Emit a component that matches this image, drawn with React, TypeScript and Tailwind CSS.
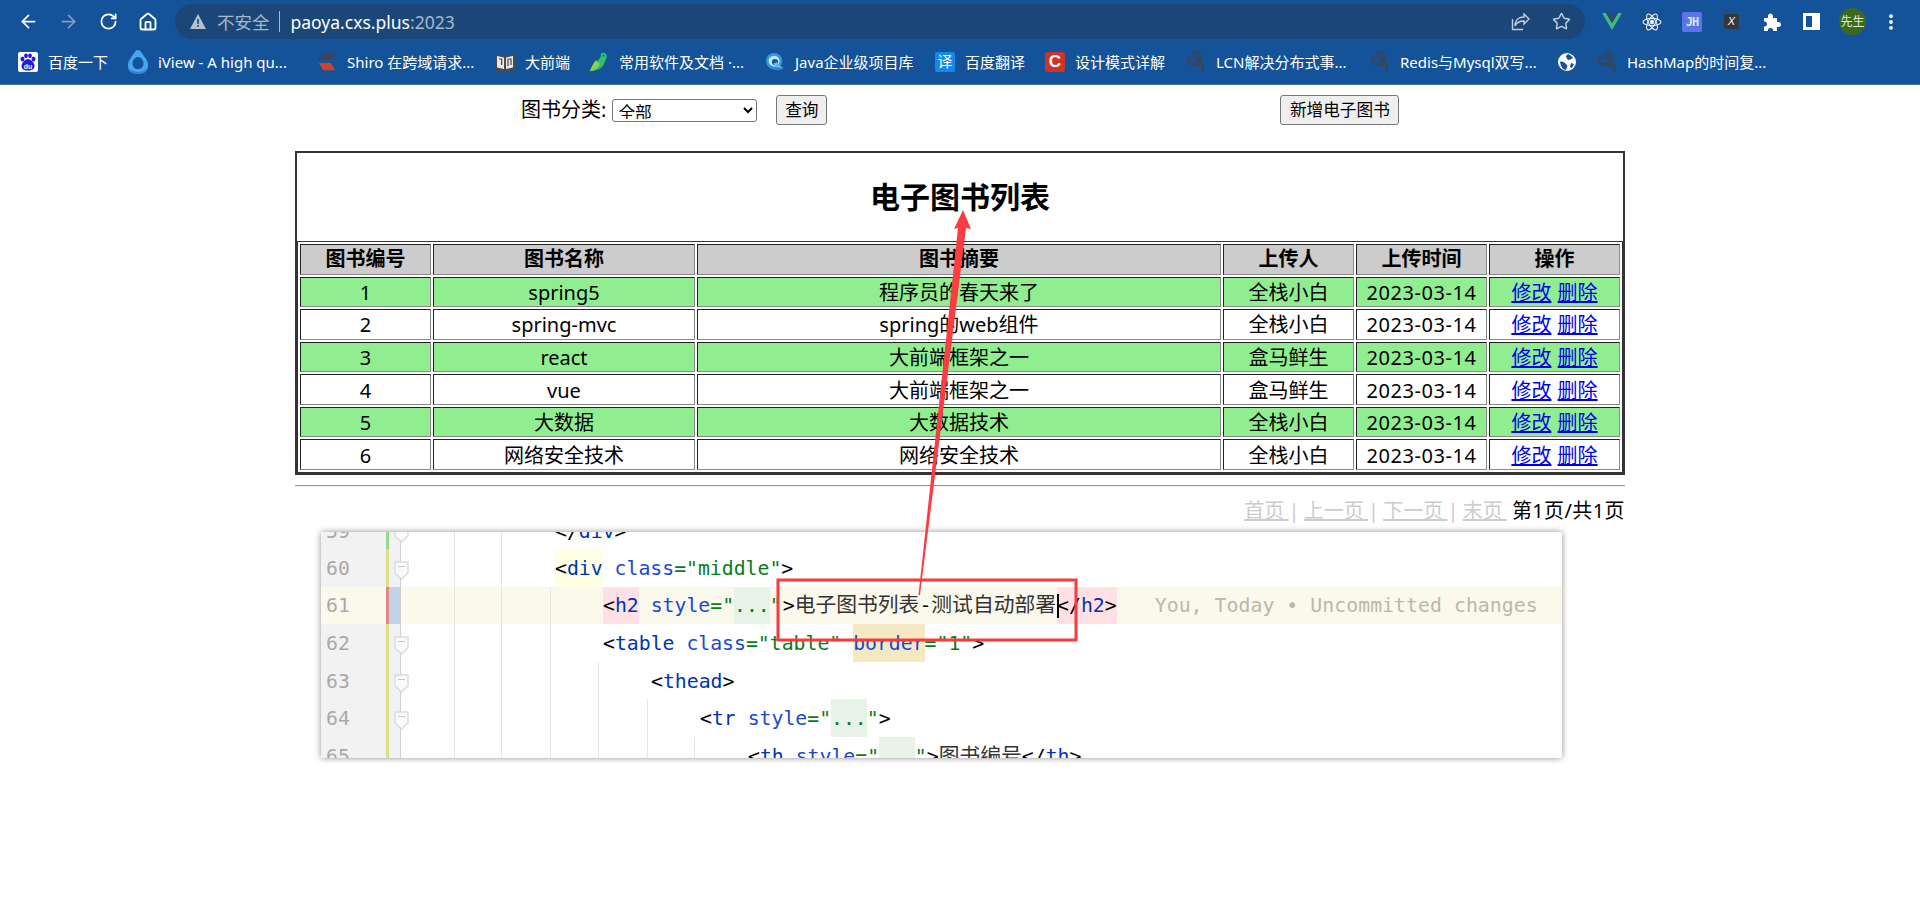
import React from "react";
import { ArrowLeft, ArrowRight, RotateCw, House, Star, EllipsisVertical } from "lucide-react";

const sans = "font-['Noto_Sans','Noto_Sans_CJK_SC',sans-serif]";

function Baidu() {
  return (
    <svg width="20" height="20" viewBox="0 0 20 20">
      <rect width="20" height="20" rx="2" fill="#fff" />
      <g fill="#2319dc">
        <ellipse cx="4.500" cy="7" rx="2" ry="2.500" />
        <ellipse cx="8" cy="3.800" rx="1.900" ry="2.400" />
        <ellipse cx="12" cy="3.800" rx="1.900" ry="2.400" />
        <ellipse cx="15.500" cy="7" rx="2" ry="2.500" />
        <path d="M10 7c3 0 6.500 4 6.500 7 0 3-2.500 4.500-6.500 4.500s-6.500-1.500-6.500-4.500c0-3 3.500-7 6.500-7z" />
      </g>
      <text x="10" y="16.500" fontSize="7" fontWeight="700" textAnchor="middle" fill="#fff" fontFamily="Liberation Sans">du</text>
    </svg>
  );
}
function IView() {
  return (
    <svg width="20" height="24" viewBox="0 0 20 24">
      <path d="M10 0c1.500 0 2.500 1 3.500 2.500L18 9c2 3 2 5 2 7 0 5-4 8-10 8S0 21 0 16c0-2 0-4 2-7l4.500-6.500C7.500 1 8.500 0 10 0z" fill="#45a5ee" />
      <path d="M10 7c3.200 0 5.500 3 5.500 6.500S13.200 19 10 19s-5.500-2-5.500-5.500S6.800 7 10 7z" fill="#14539a" />
      <path d="M1 19c2 3 5 5 9 5s8-2 9-6c-2 2.500-5 4-8 4-4 0-7-1-10-3z" fill="#2f7fd6" />
    </svg>
  );
}
function Shiro() {
  return (
    <svg width="22" height="20" viewBox="0 0 22 20">
      <path d="M7 1h13l-5 7H2z" fill="#3f4450" />
      <path d="M2 11h13l5 8H7z" fill="#d8402e" />
    </svg>
  );
}
function Book() {
  return (
    <svg width="20" height="20" viewBox="0 0 20 20">
      <path d="M0 2l10 2 10-2v16l-10 2-10-2z" fill="#4a4a4a" />
      <path d="M2 4l7 1.500V17l-7-1.500zM18 4l-7 1.500V17l7-1.500z" fill="#e8e8e8" />
      <path d="M4 7h2.600v6M13 7h3v6M13 7v7" stroke="#444" strokeWidth="1.200" fill="none" />
    </svg>
  );
}
function Bird() {
  return (
    <svg width="24" height="24" viewBox="0 0 24 24">
      <path d="M16 1c4 0 6 2 5 6l-3 7c-2 5-7 8-15 9 2-4 3-7 6-11 2-3 4-4 5-6 0-2 0-4 2-5z" fill="#2fc068" />
      <path d="M1 23c5-1 10-3 12-9l-5-4c-3 4-5 8-7 13z" fill="#8bd14a" />
      <circle cx="17.500" cy="4.500" r="1.100" fill="#14539a" />
    </svg>
  );
}
function JavaIcon() {
  return (
    <svg width="22" height="22" viewBox="0 0 22 22">
      <circle cx="10" cy="10" r="9" fill="#2d9ae0" />
      <circle cx="10" cy="10" r="6" fill="#c6e6f7" />
      <circle cx="11" cy="11" r="3.400" fill="#14539a" />
      <path d="M9 13c3 4 7 5 12 5-4-2-6-4-8-7z" fill="#5fbdea" />
      <path d="M5 15c4 4 9 5 14 3" stroke="#2d8ccc" strokeWidth="2" fill="none" />
    </svg>
  );
}
function YiIcon() {
  return (
    <div className="flex h-5 w-5 items-center justify-center rounded-[2px] bg-[#1588ec] text-[15px] leading-none text-white">译</div>
  );
}
function CIcon() {
  return (
    <div className="flex h-5 w-5 items-center justify-center rounded-[3px] bg-[#cf3429] font-['Liberation_Sans',sans-serif] text-[17px] leading-none font-bold text-white">C</div>
  );
}
function Sketch() {
  return (
    <svg width="20" height="24" viewBox="0 0 20 24" fill="none" stroke="#3d4450" strokeWidth="2">
      <circle cx="11" cy="5.500" r="3.200" />
      <path d="M14 3c1 4 0 8-4 10-2 1-5 1-8-1 0-2 0-4 1-6M15 9l3 13M2 12l6 3 9-1" />
    </svg>
  );
}
function GlobeIcon() {
  return (
    <svg width="18" height="18" viewBox="0 0 18 18">
      <circle cx="9" cy="9" r="9" fill="#fff" />
      <path d="M10 1c2 1 4 2 5 4-2 1-3 2-5 2-1-2-2-2-2-4zM2 9c2-1 4 0 6 2 1 1 2 2 1 3l-1 3c-3 0-5-3-6-8zM13 10l3 1-2 4-2-1z" fill="#14539a" />
    </svg>
  );
}

const bookmarks: { icon: React.ReactNode; text: string; w: string }[] = [
  { icon: <Baidu />, text: "百度一下", w: "w-[110px]" },
  { icon: <IView />, text: "iView - A high qu...", w: "w-[189px]" },
  { icon: <Shiro />, text: "Shiro 在跨域请求...", w: "w-[178px]" },
  { icon: <Book />, text: "大前端", w: "w-[94px]" },
  { icon: <Bird />, text: "常用软件及文档 ·...", w: "w-[176px]" },
  { icon: <JavaIcon />, text: "Java企业级项目库", w: "w-[170px]" },
  { icon: <YiIcon />, text: "百度翻译", w: "w-[110px]" },
  { icon: <CIcon />, text: "设计模式详解", w: "w-[141px]" },
  { icon: <Sketch />, text: "LCN解决分布式事...", w: "w-[184px]" },
  { icon: <Sketch />, text: "Redis与Mysql双写...", w: "w-[187px]" },
  { icon: <GlobeIcon />, text: "", w: "w-[40px]" },
  { icon: <Sketch />, text: "HashMap的时间复...", w: "w-[190px]" },
];

function Browser() {
  return (
    <div className={`h-[85px] border-b border-[#3f72ad] bg-[#14539a] text-white ${sans}`}>
      <div className="flex h-[39px] items-start pt-[4px]">
        <div className="flex h-[35px] w-[175px] items-center pl-[18px] text-white">
          <ArrowLeft size={21} strokeWidth={2} />
          <ArrowRight size={21} strokeWidth={2} className="ml-[19px] text-[#7e9fc6]" />
          <RotateCw size={19} strokeWidth={2.200} className="ml-[20px]" />
          <House size={20} strokeWidth={2.200} className="ml-[20px]" />
        </div>
        <div className="flex h-[35px] w-[1410px] items-center rounded-full bg-[#1a4778] pl-[15px] pr-[14px]">
          <svg width="16" height="15" viewBox="0 0 16 15">
            <path d="M8 0l8 15H0z" fill="#b4c0ce" />
            <rect x="7.200" y="5" width="1.600" height="5" fill="#1a4778" />
            <rect x="7.200" y="11" width="1.600" height="1.700" fill="#1a4778" />
          </svg>
          <span className="ml-[11px] pt-[2px] text-[17.500px] leading-none text-[#a8b8ca]">不安全</span>
          <span className="ml-[9px] h-[21px] w-px bg-[#a8b8ca]" />
          <span className="ml-[11px] pt-[2px] text-[17.500px] leading-none">paoya.cxs.plus<span className="text-[#a8b8ca]">:2023</span></span>
          <div className="ml-auto flex items-center gap-[22px] text-[#c5cfdb]">
            <svg width="19" height="18" viewBox="0 0 19 18" fill="none" stroke="currentColor" strokeWidth="1.400">
              <path d="M13 1l5 5-5 5V8c-4 0-7 1-9 5 0-6 4-9 9-9z" />
              <path d="M12 16.500H1.500V6" />
            </svg>
            <Star size={19} strokeWidth={1.800} />
          </div>
        </div>
        <div className="flex h-[35px] flex-1 items-center pl-[17px]">
          <svg width="20" height="17" viewBox="0 0 20 17">
            <path d="M0 0h4l6 10L16 0h4L10 17z" fill="#41b883" />
            <path d="M4 0h3.500L10 4.500 12.500 0H16l-6 10z" fill="#35495e" />
          </svg>
          <svg className="ml-[20px]" width="20" height="20" viewBox="0 0 20 20" fill="none" stroke="#e4edf6" strokeWidth="1.100">
            <rect width="20" height="20" fill="#1a4e8c" stroke="none" />
            <ellipse cx="10" cy="10" rx="9" ry="3.600" />
            <ellipse cx="10" cy="10" rx="9" ry="3.600" transform="rotate(60 10 10)" />
            <ellipse cx="10" cy="10" rx="9" ry="3.600" transform="rotate(120 10 10)" />
            <circle cx="10" cy="10" r="1.700" fill="#e4edf6" />
          </svg>
          <div className="ml-[20px] flex h-[20px] w-[20px] items-center justify-center rounded-[2px] bg-[#5b74e8] font-['DejaVu_Sans_Mono',monospace] text-[12px] leading-none font-bold tracking-[-1px] text-[#dfe6ff]">JH</div>
          <div className="ml-[22px] flex h-[15px] w-[15px] items-center justify-center rounded-[2px] bg-[#33383d] font-['Liberation_Sans',sans-serif] text-[11px] leading-none italic text-white">X</div>
          <svg className="ml-[24px]" width="18" height="18" viewBox="0 0 18 18" fill="#fff">
            <path d="M1 5h4c-.5-3 1-4.500 2.500-4.500S10.500 2 10 5h4v4c3-.5 4 1 4 2.500S17 14.500 14 14v4H10c.5-2-1-3-2.500-3S4.500 16 5 18H1v-4.500c2 .5 3-1 3-2.500S3 8 1 8.500z" />
          </svg>
          <div className="ml-[22px] h-[17px] w-[17px] border-[3px] border-r-[8px] border-white" />
          <div className="ml-[19px] flex h-[27px] w-[27px] items-center justify-center rounded-full bg-[#3a6a1e] text-[12px] leading-none text-[#e6f0dc]">先生</div>
          <EllipsisVertical size={20} strokeWidth={2.600} className="ml-[15px]" />
        </div>
      </div>
      <div className="flex h-[45px] items-center pl-[18px]">
        {bookmarks.map((b, i) => (
          <div key={i} className={`flex shrink-0 items-center ${b.w}`}>
            <div className="flex w-[20px] shrink-0 items-center justify-center">{b.icon}</div>
            {b.text && <span className="ml-[10px] pt-[2px] text-[15px] leading-none whitespace-nowrap">{b.text}</span>}
          </div>
        ))}
      </div>
    </div>
  );
}

const rows = [
  ["1", "spring5", "程序员的春天来了", "全栈小白"],
  ["2", "spring-mvc", "spring的web组件", "全栈小白"],
  ["3", "react", "大前端框架之一", "盒马鲜生"],
  ["4", "vue", "大前端框架之一", "盒马鲜生"],
  ["5", "大数据", "大数据技术", "全栈小白"],
  ["6", "网络安全技术", "网络安全技术", "全栈小白"],
];
const cell = "h-[30.570px] border border-t-[#222] border-l-[#222] border-r-[#8a8a8a] border-b-[#8a8a8a] p-0 text-center align-middle";

function BookTable() {
  return (
    <div className="border-2 border-[#333]">
      <h2 className="flex h-[88px] items-center justify-center text-[30px] leading-none font-bold text-black">电子图书列表</h2>
      <table className="w-[1326px] table-fixed border-separate border-spacing-[2px] border border-[#333] text-[20px] leading-none text-black">
        <colgroup>
          <col className="w-[131px]" />
          <col className="w-[262px]" />
          <col className="w-[524px]" />
          <col className="w-[131px]" />
          <col className="w-[131px]" />
          <col className="w-[131px]" />
        </colgroup>
        <thead>
          <tr className="bg-[#cccccc]">
            {["图书编号", "图书名称", "图书摘要", "上传人", "上传时间", "操作"].map((h) => (
              <th key={h} className={`${cell} font-bold`}>{h}</th>
            ))}
          </tr>
        </thead>
        <tbody>
          {rows.map((r, i) => (
            <tr key={r[0]} className={i % 2 === 0 ? "bg-[#90ee90]" : "bg-white"}>
              <td className={`${cell} pt-[2px]`}>{r[0]}</td>
              <td className={`${cell} pt-[2px]`}>{r[1]}</td>
              <td className={`${cell} pt-[2px]`}>{r[2]}</td>
              <td className={`${cell} pt-[2px]`}>{r[3]}</td>
              <td className={`${cell} pt-[2px] tracking-[0.55px]`}>2023-03-14</td>
              <td className={`${cell} pt-[2px]`}>
                <a className="text-[#0000ee] underline">修改</a>
                <span> </span>
                <a className="ml-[1px] text-[#0000ee] underline">删除</a>
              </td>
            </tr>
          ))}
        </tbody>
      </table>
    </div>
  );
}

const P = ({ c }: { c: string }) => <span className="text-black">{c}</span>;
const Tg = ({ c }: { c: string }) => <span className="text-[#0033b3]">{c}</span>;
const A = ({ c }: { c: string }) => <span className="text-[#174ad4]">{c}</span>;
const G = ({ c }: { c: string }) => <span className="text-[#067d17]">{c}</span>;
const Hl = ({ bg, children }: { bg: string; children: React.ReactNode }) => (
  <span className={`inline-block h-full ${bg}`}>{children}</span>
);
const Cn = ({ c }: { c: string }) => <span className="font-['Noto_Sans_CJK_SC',sans-serif] text-[20.800px] leading-[0] text-[#333]">{c}</span>;

type Line = {
  n: number;
  stripe: string;
  guides: number[];
  indent: string;
  code: React.ReactNode;
  active?: boolean;
  fold?: boolean;
};
const lines: Line[] = [
  { n: 59, stripe: "bg-[#8fdb8f]", guides: [53, 100], indent: "pl-[154px]", fold: true, code: <><P c="</" /><Tg c="div" /><P c=">" /></> },
  {
    n: 60, stripe: "bg-[#dde08b]", guides: [53, 100], indent: "pl-[154px]", fold: true,
    code: <><Hl bg="bg-[#ffffe6]"><P c="<" /><Tg c="div" /></Hl> <A c="class" /><G c={'="middle"'} /><P c=">" /></>,
  },
  {
    n: 61, stripe: "bg-[#e58585]", guides: [53, 100, 149], indent: "pl-[202px]", active: true,
    code: (
      <>
        <Hl bg="bg-[#ffe0e4]"><P c="<" /><Tg c="h2" /></Hl> <A c="style" /><G c={'="'} /><Hl bg="bg-[#e8f3e8]"><G c="..." /></Hl><G c={'"'} /><span className="pl-[1px]"><P c=">" /></span>
        <Cn c="电子图书列表" /><P c="-" /><Cn c="测试自动部署" />
        <span className="relative ml-[1px] inline-block h-full bg-[#ffe0e4]">
          <span className="absolute left-0 top-[7px] h-[24px] w-[2px] bg-black" />
          <P c="</" /><Tg c="h2" /><P c=">" />
        </span>
        <span className="ml-[38px] tracking-[0.06px] text-[#b9b8ad]">You, Today • Uncommitted changes</span>
      </>
    ),
  },
  {
    n: 62, stripe: "bg-[#dde08b]", guides: [53, 100, 149], indent: "pl-[202px]", fold: true,
    code: <><P c="<" /><Tg c="table" /> <A c="class" /><G c={'="table"'} /> <Hl bg="bg-[#f5e9c4]"><A c="border" /></Hl><G c={'="1"'} /><P c=">" /></>,
  },
  { n: 63, stripe: "bg-[#dde08b]", guides: [53, 100, 149, 197], indent: "pl-[250px]", fold: true, code: <><P c="<" /><Tg c="thead" /><P c=">" /></> },
  {
    n: 64, stripe: "bg-[#dde08b]", guides: [53, 100, 149, 197, 246], indent: "pl-[299px]", fold: true,
    code: <><P c="<" /><Tg c="tr" /> <A c="style" /><G c={'="'} /><Hl bg="bg-[#e8f3e8]"><G c="..." /></Hl><G c={'"'} /><P c=">" /></>,
  },
  {
    n: 65, stripe: "bg-[#dde08b]", guides: [53, 100, 149, 197, 246, 293], indent: "pl-[347px]",
    code: <><P c="<" /><Tg c="th" /> <A c="style" /><G c={'="'} /><Hl bg="bg-[#e8f3e8]"><G c="..." /></Hl><G c={'"'} /><P c=">" /><Cn c="图书编号" /><P c="</" /><Tg c="th" /><P c=">" /></>,
  },
];

function Fold() {
  return (
    <svg className="absolute left-[-7px] top-[12px]" width="15" height="19" viewBox="0 0 15 19">
      <path d="M1 1h13v11l-6.500 6L1 12z" fill="#fafafa" stroke="#dcdcdc" strokeWidth="1.500" />
      <path d="M4 5.500h7" stroke="#c8c8c8" strokeWidth="1.200" />
    </svg>
  );
}

function Editor() {
  return (
    <div className="ml-[26px] h-[226px] w-[1241px] overflow-hidden rounded-[2px] bg-white shadow-[0_0_6px_rgba(0,0,0,0.45)]">
      <div className="-mt-[20px] font-['DejaVu_Sans_Mono','Noto_Sans_CJK_SC',monospace] text-[19.800px] whitespace-pre">
        {lines.map((l) => (
          <div key={l.n} className={`flex h-[37.500px] ${l.active ? "bg-[#fbf9ec] leading-[37.500px]" : "leading-[39.500px]"}`}>
            <div className={`w-[65px] shrink-0 pl-[5px] text-[#a9a9a9] ${l.active ? "" : "bg-[#f2f2f2]"}`}>{l.n}</div>
            <div className={`w-[3px] shrink-0 ${l.stripe}`} />
            <div className={`w-[11px] shrink-0 ${l.active ? "bg-[#c0d4e8]" : "bg-[#f2f2f2]"}`} />
            <div className={`relative min-w-0 flex-1 border-l border-[#cfcfcf] ${l.indent}`}>
              {l.guides.map((g) => (
                <span key={g} className="absolute inset-y-0 w-px bg-[#e6e6e6]" style={{ left: g }} />
              ))}
              {l.fold && <Fold />}
              <span className="relative">{l.code}</span>
            </div>
          </div>
        ))}
      </div>
    </div>
  );
}

export default function App() {
  return (
    <div className={`relative h-[908px] w-[1920px] overflow-hidden bg-white text-black ${sans}`}>
      <Browser />
      <div className="mx-auto w-[1330px]">
        <div className="flex h-[66px] items-start pl-[226px] pt-[10px] text-[20px] leading-none">
          <div className="flex h-[30px] items-center">
            <span>图书分类:</span>
            <select className="ml-[6px] h-[23px] w-[145px] rounded-[3px] border border-[#767676] bg-white pb-[2px] pl-[1px] text-[16.670px] leading-none">
              <option>全部</option>
            </select>
          </div>
          <button className="ml-[19px] h-[30px] w-[51px] rounded-[3px] border border-[#767676] bg-[#efefef] text-[16.670px] leading-none">查询</button>
          <button className="ml-[453px] h-[30px] w-[119px] rounded-[3px] border border-[#767676] bg-[#efefef] text-[16.670px] leading-none">新增电子图书</button>
        </div>
        <BookTable />
        <div className="mt-[10px] h-[2px] border-t border-b border-t-[#9a9a9a] border-b-[#eeeeee]" />
        <div className="flex h-[45px] items-center justify-end pt-[3px] text-[20px] leading-none whitespace-pre">
          <span className="text-[#cccccc] [word-spacing:-1px]">
            <a className="underline">首页 </a>| <a className="underline">上一页 </a>| <a className="underline">下一页 </a>| <a className="underline">末页 </a>
          </span>
          <span className="ml-[5px] tracking-[0.4px]">第1页/共1页</span>
        </div>
        <Editor />
      </div>
      <svg className="pointer-events-none absolute inset-0" width="1920" height="908" viewBox="0 0 1920 908">
        <rect x="778" y="580" width="298" height="60" fill="none" stroke="#f83a3a" strokeWidth="3" />
        <path d="M963 210L971 229L966 228L920 595L918.500 595L958 228L954 229Z" fill="#fb3c42" />
      </svg>
    </div>
  );
}
